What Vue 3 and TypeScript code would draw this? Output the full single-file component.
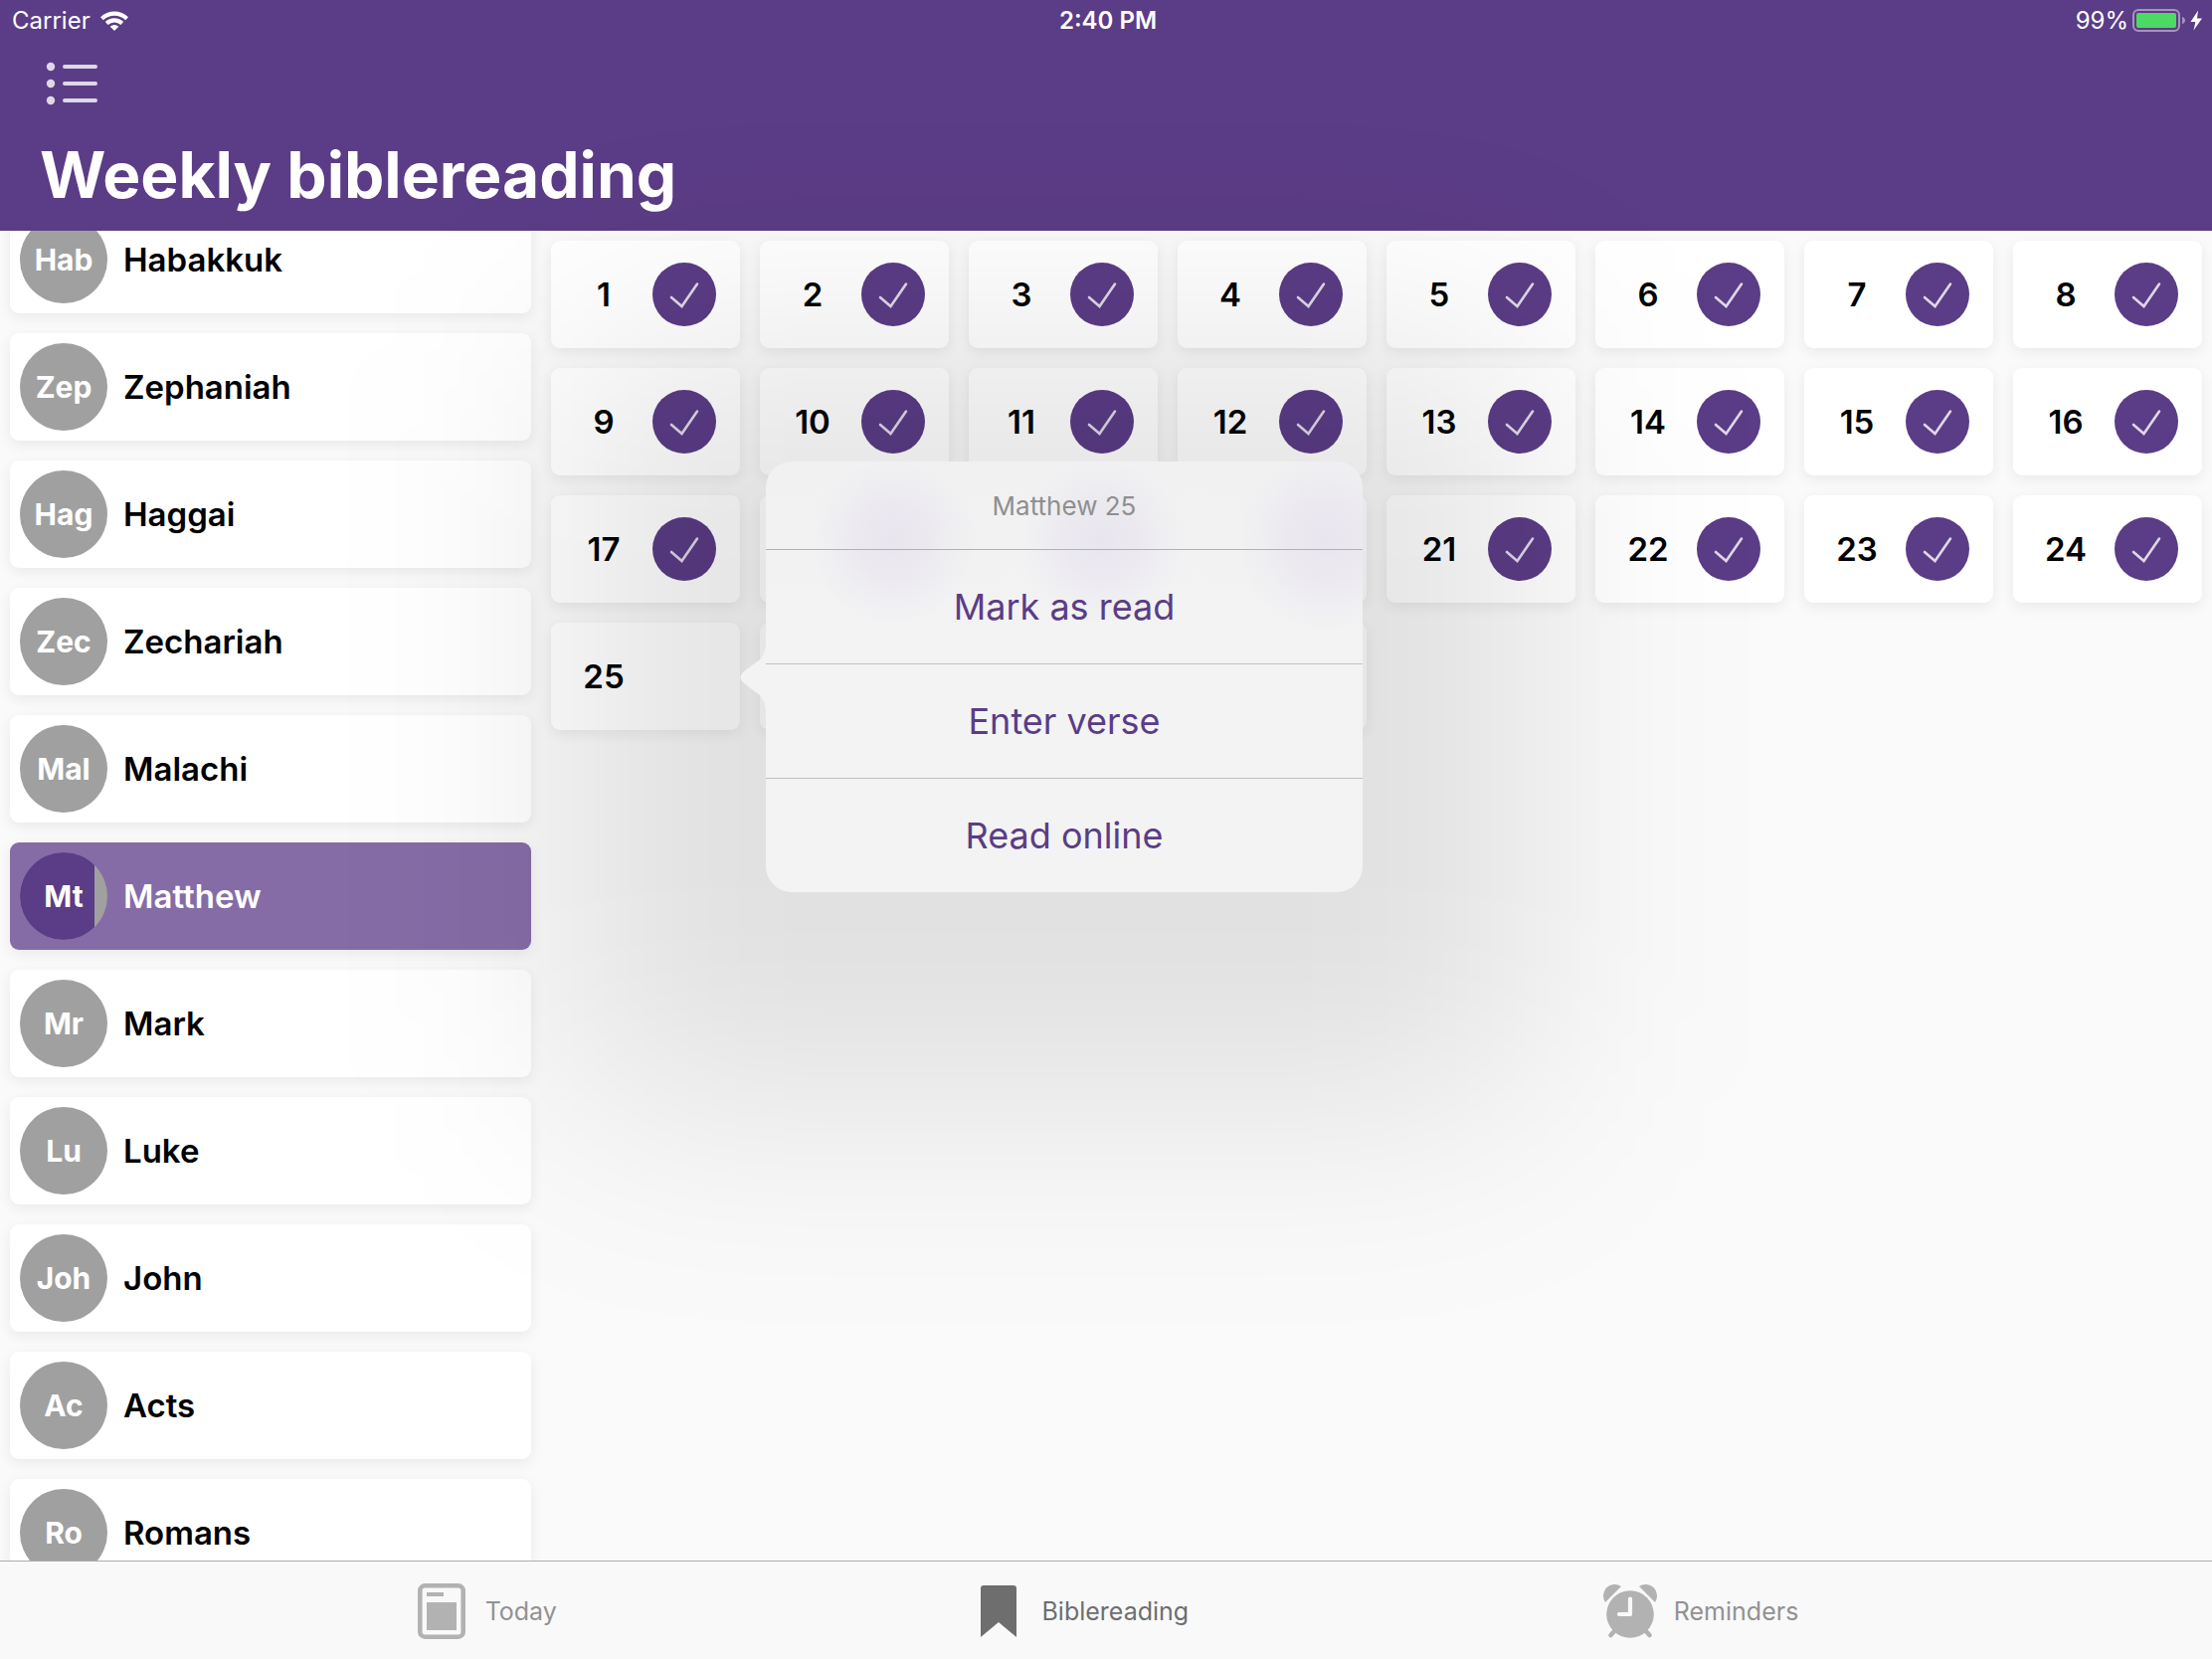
<script setup lang="ts">
import { onMounted, ref } from 'vue'

interface Book {
  abbr: string
  name: string
  progress: number
}

const books: Book[] = [
  { abbr: 'Hab', name: 'Habakkuk', progress: 0 },
  { abbr: 'Zep', name: 'Zephaniah', progress: 0 },
  { abbr: 'Hag', name: 'Haggai', progress: 0 },
  { abbr: 'Zec', name: 'Zechariah', progress: 0 },
  { abbr: 'Mal', name: 'Malachi', progress: 0 },
  { abbr: 'Mt', name: 'Matthew', progress: 24 / 28 },
  { abbr: 'Mr', name: 'Mark', progress: 0 },
  { abbr: 'Lu', name: 'Luke', progress: 0 },
  { abbr: 'Joh', name: 'John', progress: 0 },
  { abbr: 'Ac', name: 'Acts', progress: 0 },
  { abbr: 'Ro', name: 'Romans', progress: 0 },
]

const selectedBook = ref('Matthew')
const openChapter = ref(25)
const lastRead = 24
const chapters = Array.from({ length: 28 }, (_, i) => i + 1)
const actions = ['Mark as read', 'Enter verse', 'Read online']

const tabs = ['Today', 'Biblereading', 'Reminders']
const activeTab = ref('Biblereading')

const sidebar = ref<HTMLElement | null>(null)
onMounted(() => {
  if (sidebar.value) sidebar.value.scrollTop = 35
})
</script>

<template>
  <div class="app">
    <header class="header">
      <div class="status">
        <div class="status-side">
          <span>Carrier</span>
          <svg class="wifi" viewBox="0 0 28 20" aria-hidden="true">
            <path d="M0 6.2A20 20 0 0 1 28 6.2L25.2 9.2A16 16 0 0 0 2.8 9.2Z" />
            <path d="M4.8 11.1A13.2 13.2 0 0 1 23.2 11.1L20.4 14A9.2 9.2 0 0 0 7.6 14Z" />
            <path d="M9.7 15.8A6.2 6.2 0 0 1 18.3 15.8L14 20Z" />
          </svg>
        </div>
        <time class="clock">2:40 PM</time>
        <div class="status-side status-end">
          <span>99%</span>
          <svg class="battery" viewBox="0 0 72 24" aria-hidden="true">
            <rect x="1" y="1" width="46" height="21" rx="5" fill="none" stroke="#fff" stroke-opacity=".45" stroke-width="2" />
            <rect x="4" y="4" width="40" height="15" rx="2" fill="#4cd964" />
            <path d="M50 8C54 9 54 14 50 15Z" fill="#fff" fill-opacity=".45" />
            <path d="M66 1.5L58.5 13H63.4L61.5 21.5L70 9.5H65Z" fill="#fff" />
          </svg>
        </div>
      </div>
      <button class="menu" type="button" aria-label="Menu">
        <svg viewBox="0 0 54 44" aria-hidden="true">
          <g fill="#fff" fill-opacity=".8">
            <circle cx="5" cy="5" r="4.2" />
            <circle cx="5" cy="22" r="4.2" />
            <circle cx="5" cy="39" r="4.2" />
            <rect x="17" y="3" width="35" height="4" rx="2" />
            <rect x="17" y="20" width="35" height="4" rx="2" />
            <rect x="17" y="37" width="35" height="4" rx="2" />
          </g>
        </svg>
      </button>
      <h1>Weekly biblereading</h1>
    </header>

    <div class="body">
      <nav ref="sidebar" class="sidebar" aria-label="Books">
        <ul class="books">
          <li v-for="book in books" :key="book.name">
            <button
              type="button"
              class="card book"
              :class="{ selected: book.name === selectedBook }"
              @click="selectedBook = book.name"
            >
              <span class="badge">
                <span class="fill" :style="{ width: book.progress * 100 + '%' }"></span>
                <span class="abbr">{{ book.abbr }}</span>
              </span>
              <span class="name">{{ book.name }}</span>
            </button>
          </li>
        </ul>
      </nav>

      <main class="main">
        <ol class="chapters">
          <li v-for="n in chapters" :key="n" :class="{ open: n === openChapter }">
            <button type="button" class="card chapter" @click="openChapter = n">
              <span class="number">{{ n }}</span>
              <span class="mark">
                <svg v-if="n <= lastRead" viewBox="0 0 64 64" aria-label="Read">
                  <circle cx="32" cy="32" r="32" fill="#5b3c86" />
                  <path
                    d="M19 35L29.5 44L45 21.5"
                    fill="none"
                    stroke="#fff"
                    stroke-opacity=".8"
                    stroke-width="2.6"
                    stroke-linecap="round"
                  />
                </svg>
              </span>
            </button>
            <div v-if="n === openChapter" class="popover" role="menu">
              <div class="shade"></div>
              <svg class="arrow" viewBox="0 0 26 74" aria-hidden="true">
                <path d="M26 0C26 10 24 14 20 19L4 31Q-3 37 4 43L20 55C24 60 26 64 26 74Z" fill="#f3f3f3" />
              </svg>
              <div class="panel">
                <p class="title">{{ selectedBook }} {{ n }}</p>
                <button v-for="action in actions" :key="action" type="button" class="action" role="menuitem">
                  {{ action }}
                </button>
              </div>
            </div>
          </li>
        </ol>
      </main>
    </div>

    <nav class="tabbar" aria-label="Sections">
      <button
        v-for="tab in tabs"
        :key="tab"
        type="button"
        class="tab"
        :class="{ active: tab === activeTab }"
        @click="activeTab = tab"
      >
        <svg v-if="tab === 'Today'" viewBox="0 0 56 56" aria-hidden="true">
          <rect x="6.3" y="2.3" width="43.4" height="51.4" rx="5" fill="none" stroke="#b2b2b2" stroke-width="4.6" />
          <path d="M13 9H30V13H13ZM13 19H43V47H13Z" fill="#b2b2b2" />
        </svg>
        <svg v-else-if="tab === 'Biblereading'" viewBox="0 0 56 56" aria-hidden="true">
          <path d="M10 5Q10 2 13 2H43Q46 2 46 5V54L28 39L10 54Z" fill="#6e6e6e" />
        </svg>
        <svg v-else viewBox="0 0 56 56" aria-hidden="true">
          <g fill="#b2b2b2">
            <path d="M3 19A11.5 11.5 0 0 1 19 3Z" />
            <path d="M53 19A11.5 11.5 0 0 0 37 3Z" />
            <circle cx="28" cy="31" r="23.8" />
          </g>
          <path d="M14 46L8.5 52M42 46L47.5 52" stroke="#b2b2b2" stroke-width="4.6" stroke-linecap="round" />
          <path
            d="M28 15.5V31H17"
            fill="none"
            stroke="#f9f9f9"
            stroke-width="4.2"
            stroke-linecap="round"
            stroke-linejoin="round"
          />
        </svg>
        <span>{{ tab }}</span>
      </button>
    </nav>
  </div>
</template>

<style>
body {
  margin: 0;
  background: #fafafa;
}
</style>

<style scoped>
.app {
  display: flex;
  flex-direction: column;
  height: 100vh;
  overflow: hidden;
  background: #fafafa;
  color: #000;
  font-family: Inter, 'Liberation Sans', sans-serif;
}

button {
  border: 0;
  margin: 0;
  padding: 0;
  background: none;
  color: inherit;
  font: inherit;
  cursor: pointer;
}

ul,
ol {
  list-style: none;
  margin: 0;
  padding: 0;
}

svg {
  display: block;
}

.header {
  flex: none;
  height: 232px;
  background: #5b3c86;
  color: #fff;
}

.status {
  display: flex;
  align-items: center;
  height: 42px;
  padding: 0 8px 0 12px;
  font-size: 24px;
  line-height: 42px;
}

.status-side {
  flex: 1;
  display: flex;
  align-items: center;
  gap: 10px;
}

.status-end {
  justify-content: flex-end;
  gap: 4px;
}

.clock {
  font-weight: 600;
}

.wifi {
  width: 28px;
  height: 20px;
  fill: #fff;
}

.battery {
  width: 72px;
  height: 24px;
}

.menu {
  display: block;
  margin: 20px 46px 22px;
}

.menu svg {
  width: 54px;
  height: 44px;
}

h1 {
  margin: 0 40px;
  font-size: 64px;
  line-height: 96px;
  font-weight: 700;
}

.body {
  flex: 1;
  display: flex;
  min-height: 0;
}

.sidebar {
  flex: 0 0 544px;
  box-sizing: border-box;
  overflow-y: auto;
  scrollbar-width: none;
}

.books {
  display: flex;
  flex-direction: column;
  gap: 20px;
  padding: 10px;
}

.card {
  display: flex;
  align-items: center;
  box-sizing: border-box;
  width: 100%;
  height: 108px;
  border-radius: 9px;
  background: #fff;
  box-shadow: 0 4px 14px rgba(0, 0, 0, 0.07);
  font-size: 33px;
  line-height: 40px;
  font-weight: 600;
}

.book {
  gap: 16px;
  padding: 0 10px;
}

.badge {
  position: relative;
  display: flex;
  align-items: center;
  justify-content: center;
  width: 88px;
  height: 88px;
  border-radius: 50%;
  overflow: hidden;
  background: #a0a0a0;
  color: #fff;
  font-size: 30px;
  font-weight: 700;
}

.fill {
  position: absolute;
  inset: 0 auto 0 0;
  background: #5b3c86;
}

.abbr {
  position: relative;
}

.selected {
  background: #866ca6;
  color: #fff;
}

.main {
  position: relative;
  z-index: 1;
  flex: 1;
  min-width: 0;
}

.chapters {
  display: grid;
  grid-template-columns: repeat(auto-fill, minmax(190px, 1fr));
  gap: 20px;
  padding: 10px;
}

.chapter {
  padding: 0 24px 0 4px;
}

.number {
  flex: 1;
  text-align: center;
}

.mark {
  width: 64px;
  height: 64px;
}

.open {
  position: relative;
  z-index: 2;
}

/* The menu points at its chapter card from the right. */
.popover {
  position: absolute;
  top: 50%;
  left: 100%;
  display: flex;
  align-items: center;
  padding-top: 1px;
  transform: translateY(-50%);
}

/* Wide soft shadow round the menu. */
.shade {
  position: absolute;
  inset: -120px -170px -215px -175px;
  border-radius: 60px;
  background: rgba(0, 0, 0, 0.102);
  filter: blur(115px);
  pointer-events: none;
}

.arrow {
  position: relative;
  flex: none;
  width: 26px;
  height: 74px;
}

.panel {
  position: relative;
  width: 600px;
  border-radius: 26px;
  overflow: hidden;
  background:
    radial-gradient(circle at 128px 80px, rgba(120, 80, 190, 0.08), rgba(120, 80, 190, 0.05) 36px, rgba(120, 80, 190, 0) 84px),
    radial-gradient(circle at 338px 80px, rgba(120, 80, 190, 0.08), rgba(120, 80, 190, 0.05) 36px, rgba(120, 80, 190, 0) 84px),
    radial-gradient(circle at 564px 80px, rgba(120, 80, 190, 0.08), rgba(120, 80, 190, 0.05) 40px, rgba(120, 80, 190, 0) 92px),
    linear-gradient(#f1f1f2, #f3f3f3 200px);
}

.title {
  margin: 0;
  padding-top: 2px;
  color: #8f8f8f;
  font-size: 26px;
  line-height: 86px;
  text-align: center;
}

.action {
  display: block;
  width: 100%;
  height: 115px;
  border-top: 1px solid #c0c0c1;
  color: #5b3c86;
  font-size: 36px;
  line-height: 114px;
  text-align: center;
}

.title + .action {
  border-top-color: #b3acc3;
}

.tabbar {
  position: relative;
  z-index: 2;
  flex: none;
  display: flex;
  justify-content: space-evenly;
  box-sizing: border-box;
  height: 99px;
  padding-top: 2px;
  border-top: 1px solid #acacac;
  background: #f9f9f9;
}

.tab {
  display: flex;
  align-items: center;
  gap: 16px;
  color: #929292;
  font-size: 25px;
  line-height: 32px;
}

.tab.active {
  color: #6e6e6e;
}

.tab svg {
  width: 56px;
  height: 56px;
}
</style>
